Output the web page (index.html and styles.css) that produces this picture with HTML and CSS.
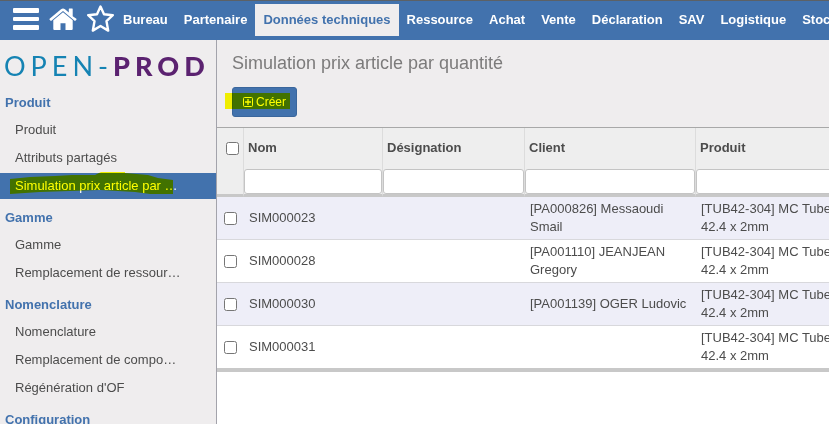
FILE: index.html
```html
<!DOCTYPE html>
<html lang="fr">
<head>
    <meta charset="UTF-8">
    <meta name="viewport" content="width=device-width, initial-scale=1.0">
    <title>Simulation prix article par quantité</title>
    <link rel="stylesheet" href="styles.css">
</head>
<body>
    <header class="topbar">
        <button type="button" class="icon-btn" aria-label="Menu">
            <svg width="26" height="30" viewBox="0 0 26 30" fill="#fff">
                <rect x="0" y="4" width="26" height="5" rx="1"/>
                <rect x="0" y="13" width="26" height="4" rx="1"/>
                <rect x="0" y="21" width="26" height="5" rx="1"/>
            </svg>
        </button>
        <a href="#" class="icon-btn" aria-label="Accueil">
            <svg width="28" height="30" viewBox="0 0 28 30" fill="#fff">
                <path d="M14 8.200 L4.300 16.200 V25 Q4.300 26 5.300 26 H11.500 V19.200 H16.500 V26 H22.700 Q23.700 26 23.700 25 V16.200 Z"/>
                <path d="M23.700 12.200 V5 Q23.700 4.500 23.200 4.500 H20.300 Q19.800 4.500 19.800 5 V8.400 L16 5.200 Q14 3.600 12 5.200 L0.600 14.700 Q0.200 15.100 0.500 15.500 L1.600 16.800 Q2 17.100 2.400 16.800 L14 7.100 L25.600 16.800 Q26 17.100 26.400 16.800 L27.500 15.500 Q27.800 15.100 27.400 14.700 Z"/>
            </svg>
        </a>
        <a href="#" class="icon-btn" aria-label="Favoris">
            <svg width="28" height="30" viewBox="0 0 28 30" fill="none" stroke="#fff" stroke-width="2.400" stroke-linejoin="round">
                <path d="M13.500 2.500 L17 10.200 L25.800 11.200 L19.500 17.200 L21.200 26.600 L13.500 22 L5.800 26.600 L7.500 17.200 L1.200 11.200 L10 10.200 Z"/>
            </svg>
        </a>
        <nav class="main-nav">
            <a href="#">Bureau</a>
            <a href="#">Partenaire</a>
            <a href="#" class="active">Données techniques</a>
            <a href="#">Ressource</a>
            <a href="#">Achat</a>
            <a href="#">Vente</a>
            <a href="#">Déclaration</a>
            <a href="#">SAV</a>
            <a href="#">Logistique</a>
            <a href="#">Stock</a>
        </nav>
    </header>

    <div class="layout">
        <aside class="sidebar">
            <div class="logo"><span class="logo-open">OPEN-</span><span class="logo-prod">PROD</span></div>

            <h3>Produit</h3>
            <ul>
                <li><a href="#">Produit</a></li>
                <li><a href="#">Attributs partagés</a></li>
                <li class="active">
                    <a href="#">Simulation prix article par …</a>
                    <svg class="marker marker-menu" width="164" height="22" viewBox="0 0 164 22" fill="#ff0">
                        <path d="M0 7 L20 5 L45 4 L62 3 L85 3 L91 0 H115 V1 L138 3 L148 6 L163 8 V22 H140 L125 20 L90 18 L60 19 L30 20 L0 22 Z"/>
                    </svg>
                </li>
            </ul>

            <h3>Gamme</h3>
            <ul>
                <li><a href="#">Gamme</a></li>
                <li><a href="#">Remplacement de ressour…</a></li>
            </ul>

            <h3>Nomenclature</h3>
            <ul>
                <li><a href="#">Nomenclature</a></li>
                <li><a href="#">Remplacement de compo…</a></li>
                <li><a href="#">Régénération d'OF</a></li>
            </ul>

            <h3>Configuration</h3>
        </aside>

        <main class="content">
            <div class="view-header">
                <h2>Simulation prix article par quantité</h2>
                <div class="actions">
                    <button type="button" class="btn-create">
                        <svg width="10" height="10" viewBox="0 0 10 10" fill="none" stroke="#fff">
                            <rect x="0.500" y="0.500" width="9" height="9" rx="1"/>
                            <path d="M5 2 V8 M2 5 H8" stroke-width="1.300"/>
                        </svg>
                        Créer
                    </button>
                    <span class="marker marker-create"></span>
                </div>
            </div>

            <table class="list">
                <colgroup>
                    <col class="col-check">
                    <col class="col-nom">
                    <col class="col-designation">
                    <col class="col-client">
                    <col>
                </colgroup>
                <thead>
                    <tr class="labels">
                        <th><input type="checkbox" aria-label="Tout sélectionner"></th>
                        <th><label for="f_nom">Nom</label></th>
                        <th><label for="f_designation">Désignation</label></th>
                        <th><label for="f_client">Client</label></th>
                        <th><label for="f_produit">Produit</label></th>
                    </tr>
                    <tr class="filters">
                        <td></td>
                        <td><input type="text" id="f_nom"></td>
                        <td><input type="text" id="f_designation"></td>
                        <td><input type="text" id="f_client"></td>
                        <td><input type="text" id="f_produit"></td>
                    </tr>
                </thead>
                <tbody>
                    <tr>
                        <td><input type="checkbox" aria-label="SIM000023"></td>
                        <td>SIM000023</td>
                        <td></td>
                        <td>[PA000826] Messaoudi Smail</td>
                        <td>[TUB42-304] MC Tube 42.4 x 2mm</td>
                    </tr>
                    <tr>
                        <td><input type="checkbox" aria-label="SIM000028"></td>
                        <td>SIM000028</td>
                        <td></td>
                        <td>[PA001110] JEANJEAN Gregory</td>
                        <td>[TUB42-304] MC Tube 42.4 x 2mm</td>
                    </tr>
                    <tr>
                        <td><input type="checkbox" aria-label="SIM000030"></td>
                        <td>SIM000030</td>
                        <td></td>
                        <td>[PA001139] OGER Ludovic</td>
                        <td>[TUB42-304] MC Tube 42.4 x 2mm</td>
                    </tr>
                    <tr>
                        <td><input type="checkbox" aria-label="SIM000031"></td>
                        <td>SIM000031</td>
                        <td></td>
                        <td></td>
                        <td>[TUB42-304] MC Tube 42.4 x 2mm</td>
                    </tr>
                </tbody>
            </table>
        </main>
    </div>
</body>
</html>
```

FILE: styles.css
```css
* {
    box-sizing: border-box;
}
body {
    margin: 0;
    height: 100vh;
    display: flex;
    flex-direction: column;
    overflow: hidden;
    font-family: "Liberation Sans", Arial, sans-serif;
    font-size: 13px;
    line-height: 18px;
    color: #4c4c4c;
    background-color: #fff;
}
a {
    color: inherit;
    text-decoration: none;
}
h2, h3, ul {
    margin: 0;
    padding: 0;
}

/* Top bar */
.topbar {
    display: flex;
    align-items: flex-start;
    flex-shrink: 0;
    gap: 10px;
    height: 40px;
    padding: 3px 0 0 13px;
    background-color: #4272ad;
    border-top: 1px solid #5c6166;
}
.icon-btn {
    display: flex;
    flex-shrink: 0;
    padding: 0;
    border: none;
    background: none;
    cursor: pointer;
}
.main-nav {
    display: flex;
    margin-left: -10px;
}
.main-nav a {
    padding: 0 8px;
    line-height: 32px;
    font-weight: bold;
    color: #fff;
    white-space: nowrap;
}
.main-nav .active {
    background-color: #efedee;
    color: #4272ad;
}

.layout {
    display: flex;
    flex: 1;
    min-height: 0;
}

/* Left menu */
.sidebar {
    flex: 0 0 217px;
    overflow: hidden;
    background-color: #efedee;
    border-right: 1px solid #a3a3ab;
}
.logo {
    height: 50px;
    padding-left: 4px;
    font-family: Lato, sans-serif;
    font-size: 27px;
    line-height: 52px;
    letter-spacing: 5px;
    white-space: nowrap;
}
.logo-open {
    font-weight: 400;
    color: #1583b3;
}
.logo-prod {
    font-weight: 900;
    color: #5b2270;
}
.sidebar h3 {
    padding-left: 5px;
    font-size: 13px;
    line-height: 25px;
    color: #4272ad;
}
.sidebar ul {
    padding-bottom: 6px;
    list-style: none;
}
.sidebar li {
    position: relative;
    padding-top: 2px;
}
.sidebar li a {
    display: block;
    padding-left: 15px;
    line-height: 26px;
}
.sidebar .active a {
    background-color: #4272ad;
    color: #fff;
}

/* Highlighter strokes */
.marker {
    position: absolute;
    mix-blend-mode: multiply;
    pointer-events: none;
}
.marker-menu {
    left: 10px;
    top: 1px;
}
.marker-create {
    left: -7px;
    top: 6px;
    width: 65px;
    height: 16px;
    background-color: #ff0;
}

/* Main view */
.content {
    flex: 1;
    min-width: 0;
    overflow: hidden;
}
.view-header {
    height: 88px;
    padding: 12px 15px 0;
    background-color: #efedee;
    border-bottom: 1px solid #a8a8a8;
}
.view-header h2 {
    font-size: 18px;
    font-weight: normal;
    line-height: 22px;
    color: #7c7b7b;
}
.actions {
    position: relative;
    display: flex;
    margin-top: 13px;
}
.btn-create {
    display: flex;
    align-items: center;
    gap: 3px;
    height: 30px;
    padding: 0 10px;
    border: 1px solid #3a669c;
    border-radius: 3px;
    background-color: #4272ad;
    color: #fff;
    font-family: inherit;
    font-size: 12px;
    cursor: pointer;
}

/* List */
.list {
    width: 100%;
    min-width: 630px;
    table-layout: fixed;
    border-collapse: separate;
    border-spacing: 0;
    border-bottom: 4px solid #c8c8c8;
}
.col-check {
    width: 27px;
}
.col-nom {
    width: 139px;
}
.col-designation {
    width: 142px;
}
.col-client {
    width: 171px;
}
.list input[type="checkbox"] {
    display: block;
    margin: 0;
}
.list thead {
    background-color: #eee;
}
.list thead th,
.list thead td {
    border-right: 1px solid #dcdcdc;
}
.labels th {
    height: 40px;
    padding: 0 4px;
    text-align: left;
}
.labels th:first-child {
    padding-left: 9px;
}
.filters td {
    height: 29px;
    padding: 0;
    border-bottom: 3px solid #c8c8c8;
}
.filters input {
    display: block;
    width: 100%;
    height: 25px;
    padding: 0 4px;
    border: 1px solid #c4c4c4;
    border-radius: 3px;
    background-color: #fff;
    font: inherit;
}
.list tbody td {
    height: 43px;
    padding: 3px 5px;
    border-bottom: 1px solid #d8d8dc;
    vertical-align: middle;
}
.list tbody td:first-child {
    padding-left: 7px;
}
.list tbody tr:nth-child(odd) {
    background-color: #eeeef8;
}
.list tbody tr:nth-child(even) {
    background-color: #fff;
}
.list tbody tr:last-child td {
    height: 42px;
    border-bottom: none;
}
```
